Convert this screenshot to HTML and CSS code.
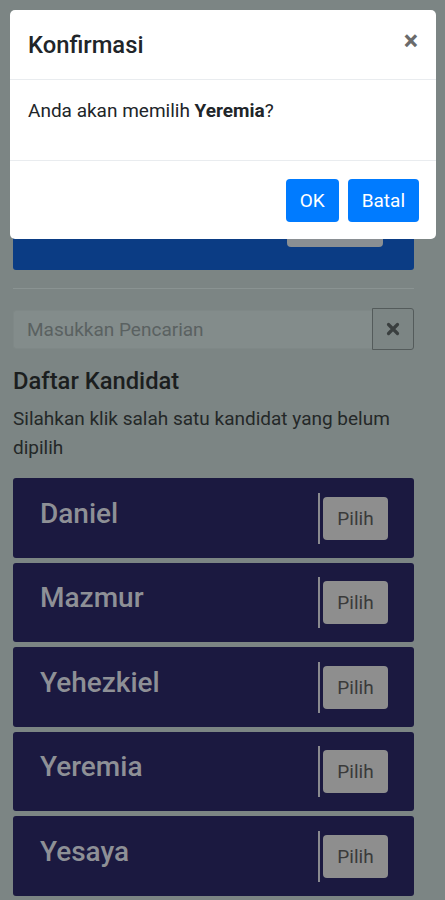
FILE: index.html
```html
<!DOCTYPE html>
<html lang="id">
<head>
<meta charset="utf-8">
<title>Daftar Kandidat</title>
<link rel="stylesheet" href="styles.css">
</head>
<body>
<div class="page">
  <div class="hero"><span class="hero-btn"></span></div>
  <hr class="divider">
  <div class="search">
    <input class="search-input" type="text" placeholder="Masukkan Pencarian">
    <button class="search-clear" type="button">
      <svg width="14" height="14" viewBox="0 0 14 14"><path d="M2.5 2.5 L11.5 11.5 M11.5 2.5 L2.5 11.5" stroke="#3a3f3f" stroke-width="3.2" stroke-linecap="round"/></svg>
    </button>
  </div>
  <h2 class="section-title">Daftar Kandidat</h2>
  <p class="section-desc">Silahkan klik salah satu kandidat yang belum dipilih</p>
  <div class="list">
    <div class="card"><span class="card-name">Daniel</span><div class="card-action"><button class="pick">Pilih</button></div></div>
    <div class="card"><span class="card-name">Mazmur</span><div class="card-action"><button class="pick">Pilih</button></div></div>
    <div class="card"><span class="card-name">Yehezkiel</span><div class="card-action"><button class="pick">Pilih</button></div></div>
    <div class="card"><span class="card-name">Yeremia</span><div class="card-action"><button class="pick">Pilih</button></div></div>
    <div class="card"><span class="card-name">Yesaya</span><div class="card-action"><button class="pick">Pilih</button></div></div>
  </div>
</div>

<div class="modal">
  <div class="modal-header">
    <h5 class="modal-title">Konfirmasi</h5>
    <span class="modal-close">&times;</span>
  </div>
  <div class="modal-body">
    <p>Anda akan memilih <b>Yeremia</b>?</p>
  </div>
  <div class="modal-footer">
    <button class="btn-primary">OK</button>
    <button class="btn-primary">Batal</button>
  </div>
</div>
</body>
</html>
```

FILE: styles.css
```css
* { box-sizing: border-box; }
html, body { margin: 0; padding: 0; }
body {
  background: #7c8584;
  font-family: Roboto, "Noto Sans", sans-serif;
  font-size: 19px;
  height: 900px;
  overflow: hidden;
  position: relative;
}
.page {
  margin-left: 13px;
  width: 401px;
}
.hero {
  margin-top: 150px;
  height: 120px;
  background: #0b3c84;
  border-radius: 3px;
  display: flex;
  justify-content: flex-end;
  align-items: flex-end;
  padding: 0 31px 23px 0;
}
.hero-btn {
  display: block;
  width: 96px;
  height: 40px;
  background: #8a8f93;
  border-radius: 4px;
}
.divider {
  border: 0;
  border-top: 1px solid #8a9392;
  margin: 18px 0 0;
}
.search {
  margin-top: 19px;
  display: flex;
  align-items: center;
}
.search-input {
  flex: 1;
  min-width: 0;
  height: 39px;
  border: 1px solid #7f8887;
  border-right: 0;
  background: #838c8b;
  border-radius: 3px 0 0 3px;
  padding: 0 13px;
  font: inherit;
  color: #333;
  outline: none;
}
.search-input::placeholder { color: #5a6161; }
.search-clear {
  width: 42px;
  height: 42px;
  border: 1px solid #545b5b;
  background: transparent;
  border-radius: 0 3px 3px 0;
  display: flex;
  align-items: center;
  justify-content: center;
  padding: 0;
}
.section-title {
  margin: 17px 0 8px;
  font-size: 23.75px;
  line-height: 28.5px;
  font-weight: 500;
  color: #1b1e1e;
}
.section-desc {
  margin: 0;
  line-height: 29px;
  color: #242828;
}
.list {
  margin-top: 16.5px;
  display: flex;
  flex-direction: column;
  gap: 5px;
}
.card {
  height: 79.5px;
  background: #1b1940;
  border-radius: 3px;
  display: flex;
  justify-content: space-between;
  align-items: flex-start;
  padding: 0 26px 0 27px;
}
.card-name {
  margin-top: 18.6px;
  font-size: 28px;
  line-height: 33.6px;
  font-weight: 500;
  color: #8e9096;
}
.card-action {
  margin-top: 14.5px;
  height: 51px;
  border-left: 2px solid #8a8a8f;
  padding-left: 3px;
}
.pick {
  margin-top: 4px;
  width: 65px;
  height: 43px;
  background: #8e8e8e;
  border: 0;
  border-radius: 4px;
  font: inherit;
  font-size: 19px;
  color: #3a3a3a;
  padding: 0;
}

.modal {
  position: absolute;
  top: 10px;
  left: 10px;
  width: 426px;
  background: #fff;
  border-radius: 5px;
}
.modal-header {
  height: 70px;
  border-bottom: 1px solid #e9ecef;
  display: flex;
  align-items: center;
  justify-content: space-between;
  padding: 0 18px 0 18px;
}
.modal-title {
  margin: 0;
  font-size: 23.75px;
  font-weight: 500;
  color: #212529;
}
.modal-close {
  font-size: 27px;
  font-weight: 700;
  color: #6b6b6b;
  line-height: 1;
  margin-top: -6px;
}
.modal-body {
  padding: 17px 18px 17px;
}
.modal-body p {
  margin: 0 0 17.5px;
  line-height: 28.5px;
  color: #212529;
}
.modal-footer {
  border-top: 1px solid #e9ecef;
  display: flex;
  justify-content: flex-end;
  gap: 9px;
  padding: 18px 17px 17px;
}
.btn-primary {
  height: 43px;
  background: #007bff;
  color: #fff;
  border: 0;
  border-radius: 4px;
  font: inherit;
  font-size: 19px;
  padding: 0 14px;
}
```
